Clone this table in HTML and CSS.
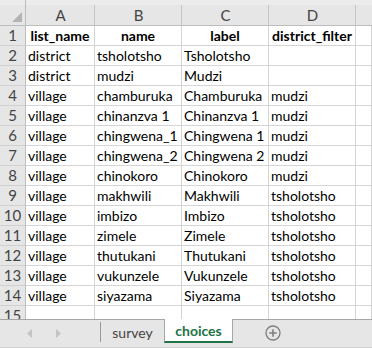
FILE: index.html
```html
<!DOCTYPE html>
<html>
<head>
<meta charset="utf-8">
<link rel="stylesheet" href="styles.css">
</head>
<body>
<div class="app">
  <div class="sheet">
    <div class="corner"><span class="tri"></span></div>
    <div class="colh">A</div><div class="colh">B</div><div class="colh">C</div><div class="colh">D</div><div class="colh last"></div>

    <div class="rowh">1</div><div class="c b">list_name</div><div class="c b">name</div><div class="c b">label</div><div class="c b">district_filter</div><div class="c"></div>
    <div class="rowh">2</div><div class="c">district</div><div class="c">tsholotsho</div><div class="c">Tsholotsho</div><div class="c"></div><div class="c"></div>
    <div class="rowh">3</div><div class="c">district</div><div class="c">mudzi</div><div class="c">Mudzi</div><div class="c"></div><div class="c"></div>
    <div class="rowh">4</div><div class="c">village</div><div class="c">chamburuka</div><div class="c">Chamburuka</div><div class="c">mudzi</div><div class="c"></div>
    <div class="rowh">5</div><div class="c">village</div><div class="c">chinanzva 1</div><div class="c">Chinanzva 1</div><div class="c">mudzi</div><div class="c"></div>
    <div class="rowh">6</div><div class="c">village</div><div class="c">chingwena_1</div><div class="c">Chingwena 1</div><div class="c">mudzi</div><div class="c"></div>
    <div class="rowh">7</div><div class="c">village</div><div class="c">chingwena_2</div><div class="c">Chingwena 2</div><div class="c">mudzi</div><div class="c"></div>
    <div class="rowh">8</div><div class="c">village</div><div class="c">chinokoro</div><div class="c">Chinokoro</div><div class="c">mudzi</div><div class="c"></div>
    <div class="rowh">9</div><div class="c">village</div><div class="c">makhwili</div><div class="c">Makhwili</div><div class="c">tsholotsho</div><div class="c"></div>
    <div class="rowh">10</div><div class="c">village</div><div class="c">imbizo</div><div class="c">Imbizo</div><div class="c">tsholotsho</div><div class="c"></div>
    <div class="rowh">11</div><div class="c">village</div><div class="c">zimele</div><div class="c">Zimele</div><div class="c">tsholotsho</div><div class="c"></div>
    <div class="rowh">12</div><div class="c">village</div><div class="c">thutukani</div><div class="c">Thutukani</div><div class="c">tsholotsho</div><div class="c"></div>
    <div class="rowh">13</div><div class="c">village</div><div class="c">vukunzele</div><div class="c">Vukunzele</div><div class="c">tsholotsho</div><div class="c"></div>
    <div class="rowh">14</div><div class="c">village</div><div class="c">siyazama</div><div class="c">Siyazama</div><div class="c">tsholotsho</div><div class="c"></div>
    <div class="rowh r15">15</div><div class="c r15"></div><div class="c r15"></div><div class="c r15"></div><div class="c r15"></div><div class="c r15"></div>
  </div>
  <div class="tabbar">
    <div class="nav">
      <svg class="arrow" width="6" height="9" viewBox="0 0 6 9"><path d="M5 0 L0 4.5 L5 9 Z" fill="#c4c4c4"/></svg>
      <svg class="arrow" width="6" height="9" viewBox="0 0 6 9"><path d="M1 0 L6 4.5 L1 9 Z" fill="#c4c4c4"/></svg>
    </div>
    <div class="sep"></div>
    <div class="tab">survey</div>
    <div class="tab active">choices</div>
    <div class="add">
      <svg width="16" height="16" viewBox="0 0 16 16"><circle cx="8" cy="8" r="7" fill="none" stroke="#7f7f7f" stroke-width="1.3"/><path d="M8 4.3V11.7M4.3 8H11.7" stroke="#7f7f7f" stroke-width="1.6"/></svg>
    </div>
  </div>
</div>
</body>
</html>
```

FILE: styles.css
```css
html, body {
  margin: 0;
  padding: 0;
  background: #ffffff;
}
.app {
  width: 372px;
  height: 348px;
  overflow: hidden;
  font-family: Lato, "Open Sans", sans-serif;
  font-size: 14px;
  color: #000;
}
.sheet {
  display: grid;
  grid-template-columns: 26px 69px 87px 87px 87px 16px;
  grid-template-rows: 26px repeat(14, 20px) 13px;
}
.sheet > div {
  box-sizing: border-box;
}
.corner {
  background: linear-gradient(#ececec 0 5px, #e6e6e6 5px);
  border-right: 1px solid #bdbdbd;
  border-bottom: 1px solid #bdbdbd;
  display: flex;
  justify-content: flex-end;
  align-items: flex-end;
  padding: 0 3px 3px 0;
}
.tri {
  width: 0;
  height: 0;
  border-left: 10px solid transparent;
  border-bottom: 10px solid #b4b4b4;
}
.colh {
  background:
    linear-gradient(#c6c6c6, #c6c6c6) right 5px / 1px calc(100% - 5px) no-repeat,
    linear-gradient(#ececec 0 5px, #e6e6e6 5px);
  border-bottom: 1px solid #bdbdbd;
  color: #444;
  font-size: 15px;
  display: flex;
  align-items: center;
  justify-content: center;
  padding-top: 5px;
}
.colh.last {
  background: linear-gradient(#ececec 0 5px, #e6e6e6 5px);
}
.rowh {
  background: #e6e6e6;
  border-right: 1px solid #bdbdbd;
  border-bottom: 1px solid #d0d0d0;
  color: #444;
  font-size: 15px;
  display: flex;
  align-items: flex-start;
  justify-content: center;
  line-height: 19px;
  overflow: hidden;
}
.c {
  border-right: 1px solid #d4d4d4;
  border-bottom: 1px solid #d4d4d4;
  padding-left: 2px;
  line-height: 19px;
  white-space: nowrap;
  overflow: hidden;
}
.c.b {
  font-weight: bold;
  text-align: center;
  padding-left: 0;
}
.r15 {
  border-bottom: none !important;
}
.tabbar {
  height: 29px;
  box-sizing: border-box;
  background: #e6e6e6;
  border-top: 1px solid #a6a6a6;
  border-bottom: 1px solid #cfcfcf;
  display: flex;
  align-items: stretch;
}
.nav {
  width: 100px;
  display: flex;
  align-items: center;
  justify-content: flex-start;
  gap: 22px;
  padding-left: 27px;
  box-sizing: border-box;
}
.sep {
  width: 1px;
  background: #9a9a9a;
  margin: 2px 0 5px;
}
.tab {
  width: 63px;
  display: flex;
  align-items: center;
  justify-content: center;
  color: #444;
  padding-bottom: 2px;
}
.tab.active {
  width: 69px;
  margin-top: -1px;
  background: #fff;
  color: #217346;
  font-weight: bold;
  border-left: 1px solid #a6a6a6;
  border-right: 1px solid #a6a6a6;
  border-bottom: 2px solid #217346;
  margin-bottom: 4px;
  box-sizing: border-box;
  padding-bottom: 0;
}
.add {
  width: 80px;
  display: flex;
  align-items: center;
  justify-content: center;
  padding-bottom: 2px;
}
```
